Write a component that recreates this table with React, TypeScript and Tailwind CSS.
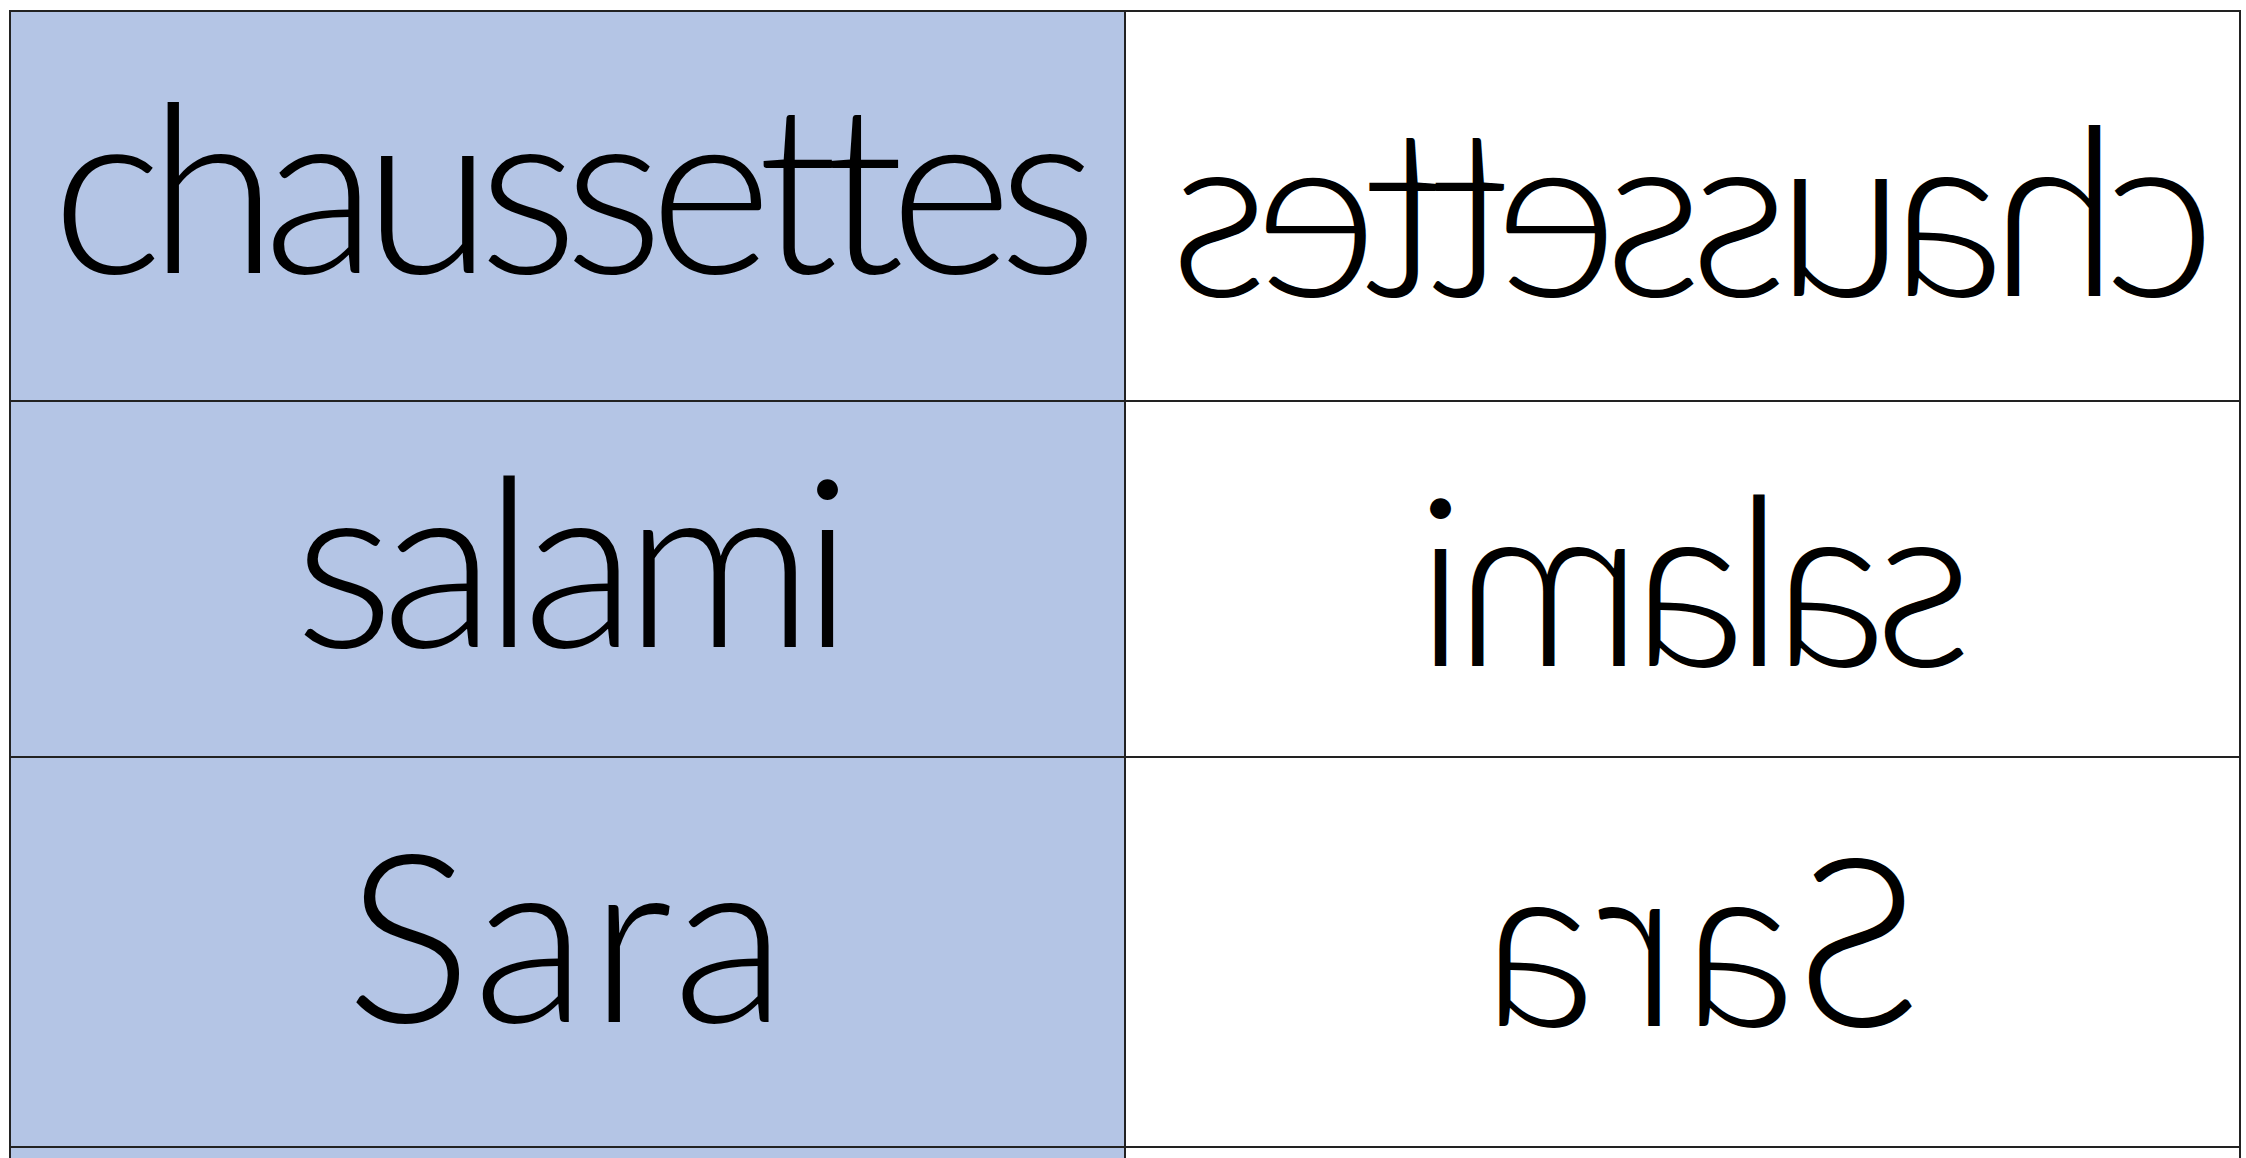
const rows = [
  { word: "chaussettes", h: "h-[390px]", track: "tracking-[-0.062em]", left: "pb-[48px]", right: "pb-[2px]" },
  { word: "salami", h: "h-[356px]", track: "tracking-[-0.054em]", left: "pb-[47px]", right: "pb-[8px]" },
  { word: "Sara", h: "h-[390px]", track: "tracking-[0.01em]", left: "pb-[42px]", right: "pb-[34px]" },
  { word: "", h: "h-[390px]", track: "", left: "", right: "" },
];

export default function App() {
  return (
    <div className="h-[1158px] w-full overflow-hidden bg-white">
      <div className="ml-[9px] mt-[10px] grid w-[2232px] grid-cols-2 border-l-2 border-t-2 border-[#222]">
        {rows.map((r, i) => (
          <div key={i} className="contents">
            {/* Left: word on blue */}
            <div
              className={`flex ${r.h} items-center justify-center border-r-2 border-b-2 border-[#222] bg-[#b4c5e5]`}
            >
              <span className={`${r.left} ${r.track} font-['Lato',sans-serif] text-[236px] font-light leading-none text-black`}>
                {r.word}
              </span>
            </div>
            {/* Right: mirrored word */}
            <div className={`flex ${r.h} items-center justify-center border-r-2 border-b-2 border-[#222] bg-white pl-[36px]`}>
              <span className={`-scale-x-100 ${r.right} ${r.track} font-['Lato',sans-serif] text-[236px] font-light leading-none text-black`}>
                {r.word}
              </span>
            </div>
          </div>
        ))}
      </div>
    </div>
  );
}
